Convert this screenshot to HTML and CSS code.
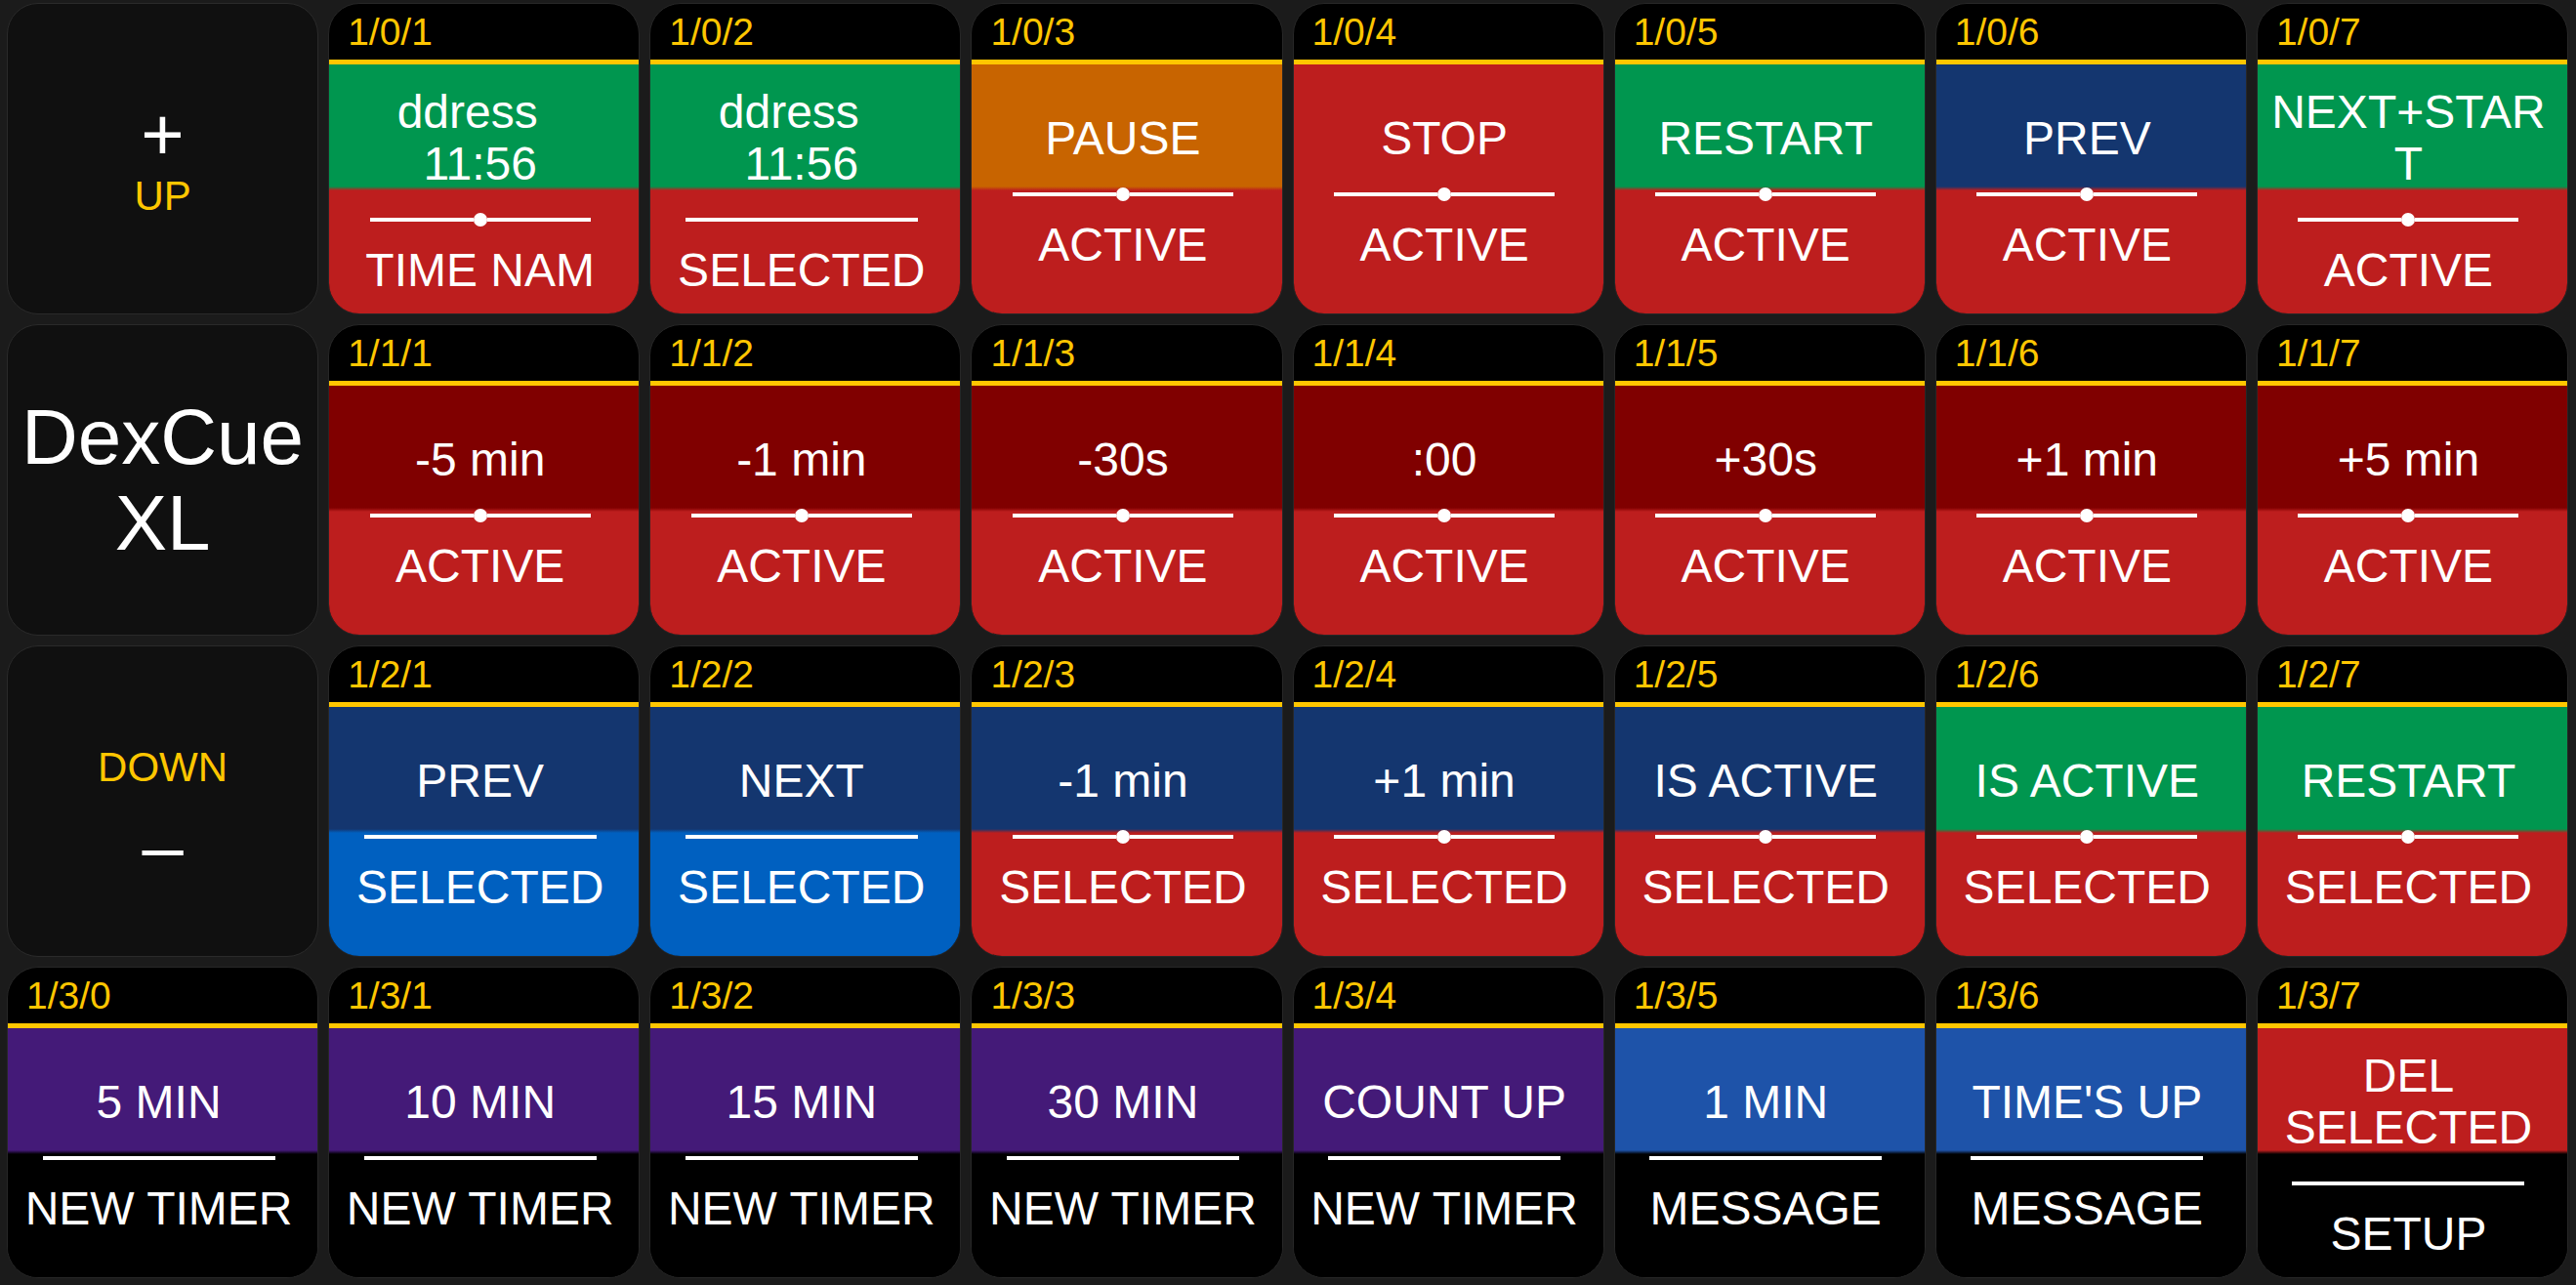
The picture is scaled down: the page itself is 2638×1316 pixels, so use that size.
FILE: index.html
```html
<!DOCTYPE html>
<html lang="en">
<head>
  <meta charset="UTF-8">
  <title>DexCue XL</title>
  <link rel="stylesheet" href="styles.css">
</head>
<body>

  <main class="deck">

    <!-- row 0 -->
    <div class="key nav nav-up">
      <div class="sym">+</div>
      <div class="hint">UP</div>
    </div>
    <div class="key t-green b-red">
      <div class="key-head">1/0/1</div>
      <div class="key-body">
        <div class="line shift">ddress</div>
        <div class="line">11:56</div>
        <div class="rule"><span class="seg"></span><span class="dot"></span><span class="seg"></span></div>
        <div class="line">TIME NAM</div>
      </div>
    </div>
    <div class="key t-green b-red">
      <div class="key-head">1/0/2</div>
      <div class="key-body">
        <div class="line shift">ddress</div>
        <div class="line">11:56</div>
        <div class="rule"><span class="bar"></span></div>
        <div class="line">SELECTED</div>
      </div>
    </div>
    <div class="key t-orange b-red">
      <div class="key-head">1/0/3</div>
      <div class="key-body">
        <div class="line">PAUSE</div>
        <div class="rule"><span class="seg"></span><span class="dot"></span><span class="seg"></span></div>
        <div class="line">ACTIVE</div>
      </div>
    </div>
    <div class="key t-red b-red">
      <div class="key-head">1/0/4</div>
      <div class="key-body">
        <div class="line">STOP</div>
        <div class="rule"><span class="seg"></span><span class="dot"></span><span class="seg"></span></div>
        <div class="line">ACTIVE</div>
      </div>
    </div>
    <div class="key t-green b-red">
      <div class="key-head">1/0/5</div>
      <div class="key-body">
        <div class="line">RESTART</div>
        <div class="rule"><span class="seg"></span><span class="dot"></span><span class="seg"></span></div>
        <div class="line">ACTIVE</div>
      </div>
    </div>
    <div class="key t-navy b-red">
      <div class="key-head">1/0/6</div>
      <div class="key-body">
        <div class="line">PREV</div>
        <div class="rule"><span class="seg"></span><span class="dot"></span><span class="seg"></span></div>
        <div class="line">ACTIVE</div>
      </div>
    </div>
    <div class="key t-green b-red">
      <div class="key-head">1/0/7</div>
      <div class="key-body">
        <div class="line">NEXT+START</div>
        <div class="rule"><span class="seg"></span><span class="dot"></span><span class="seg"></span></div>
        <div class="line">ACTIVE</div>
      </div>
    </div>

    <!-- row 1 -->
    <div class="key nav nav-name">
      <div class="name">DexCue<br>XL</div>
    </div>
    <div class="key t-maroon b-red">
      <div class="key-head">1/1/1</div>
      <div class="key-body">
        <div class="line">-5 min</div>
        <div class="rule"><span class="seg"></span><span class="dot"></span><span class="seg"></span></div>
        <div class="line">ACTIVE</div>
      </div>
    </div>
    <div class="key t-maroon b-red">
      <div class="key-head">1/1/2</div>
      <div class="key-body">
        <div class="line">-1 min</div>
        <div class="rule"><span class="seg"></span><span class="dot"></span><span class="seg"></span></div>
        <div class="line">ACTIVE</div>
      </div>
    </div>
    <div class="key t-maroon b-red">
      <div class="key-head">1/1/3</div>
      <div class="key-body">
        <div class="line">-30s</div>
        <div class="rule"><span class="seg"></span><span class="dot"></span><span class="seg"></span></div>
        <div class="line">ACTIVE</div>
      </div>
    </div>
    <div class="key t-maroon b-red">
      <div class="key-head">1/1/4</div>
      <div class="key-body">
        <div class="line">:00</div>
        <div class="rule"><span class="seg"></span><span class="dot"></span><span class="seg"></span></div>
        <div class="line">ACTIVE</div>
      </div>
    </div>
    <div class="key t-maroon b-red">
      <div class="key-head">1/1/5</div>
      <div class="key-body">
        <div class="line">+30s</div>
        <div class="rule"><span class="seg"></span><span class="dot"></span><span class="seg"></span></div>
        <div class="line">ACTIVE</div>
      </div>
    </div>
    <div class="key t-maroon b-red">
      <div class="key-head">1/1/6</div>
      <div class="key-body">
        <div class="line">+1 min</div>
        <div class="rule"><span class="seg"></span><span class="dot"></span><span class="seg"></span></div>
        <div class="line">ACTIVE</div>
      </div>
    </div>
    <div class="key t-maroon b-red">
      <div class="key-head">1/1/7</div>
      <div class="key-body">
        <div class="line">+5 min</div>
        <div class="rule"><span class="seg"></span><span class="dot"></span><span class="seg"></span></div>
        <div class="line">ACTIVE</div>
      </div>
    </div>

    <!-- row 2 -->
    <div class="key nav nav-down">
      <div class="hint">DOWN</div>
      <div class="sym">–</div>
    </div>
    <div class="key t-navy b-blue">
      <div class="key-head">1/2/1</div>
      <div class="key-body">
        <div class="line">PREV</div>
        <div class="rule"><span class="bar"></span></div>
        <div class="line">SELECTED</div>
      </div>
    </div>
    <div class="key t-navy b-blue">
      <div class="key-head">1/2/2</div>
      <div class="key-body">
        <div class="line">NEXT</div>
        <div class="rule"><span class="bar"></span></div>
        <div class="line">SELECTED</div>
      </div>
    </div>
    <div class="key t-navy b-red">
      <div class="key-head">1/2/3</div>
      <div class="key-body">
        <div class="line">-1 min</div>
        <div class="rule"><span class="seg"></span><span class="dot"></span><span class="seg"></span></div>
        <div class="line">SELECTED</div>
      </div>
    </div>
    <div class="key t-navy b-red">
      <div class="key-head">1/2/4</div>
      <div class="key-body">
        <div class="line">+1 min</div>
        <div class="rule"><span class="seg"></span><span class="dot"></span><span class="seg"></span></div>
        <div class="line">SELECTED</div>
      </div>
    </div>
    <div class="key t-navy b-red">
      <div class="key-head">1/2/5</div>
      <div class="key-body">
        <div class="line">IS ACTIVE</div>
        <div class="rule"><span class="seg"></span><span class="dot"></span><span class="seg"></span></div>
        <div class="line">SELECTED</div>
      </div>
    </div>
    <div class="key t-green b-red">
      <div class="key-head">1/2/6</div>
      <div class="key-body">
        <div class="line">IS ACTIVE</div>
        <div class="rule"><span class="seg"></span><span class="dot"></span><span class="seg"></span></div>
        <div class="line">SELECTED</div>
      </div>
    </div>
    <div class="key t-green b-red">
      <div class="key-head">1/2/7</div>
      <div class="key-body">
        <div class="line">RESTART</div>
        <div class="rule"><span class="seg"></span><span class="dot"></span><span class="seg"></span></div>
        <div class="line">SELECTED</div>
      </div>
    </div>

    <!-- row 3 -->
    <div class="key t-purple b-black">
      <div class="key-head">1/3/0</div>
      <div class="key-body">
        <div class="line">5 MIN</div>
        <div class="rule"><span class="bar"></span></div>
        <div class="line">NEW TIMER</div>
      </div>
    </div>
    <div class="key t-purple b-black">
      <div class="key-head">1/3/1</div>
      <div class="key-body">
        <div class="line">10 MIN</div>
        <div class="rule"><span class="bar"></span></div>
        <div class="line">NEW TIMER</div>
      </div>
    </div>
    <div class="key t-purple b-black">
      <div class="key-head">1/3/2</div>
      <div class="key-body">
        <div class="line">15 MIN</div>
        <div class="rule"><span class="bar"></span></div>
        <div class="line">NEW TIMER</div>
      </div>
    </div>
    <div class="key t-purple b-black">
      <div class="key-head">1/3/3</div>
      <div class="key-body">
        <div class="line">30 MIN</div>
        <div class="rule"><span class="bar"></span></div>
        <div class="line">NEW TIMER</div>
      </div>
    </div>
    <div class="key t-purple b-black">
      <div class="key-head">1/3/4</div>
      <div class="key-body">
        <div class="line">COUNT UP</div>
        <div class="rule"><span class="bar"></span></div>
        <div class="line">NEW TIMER</div>
      </div>
    </div>
    <div class="key t-blue b-black">
      <div class="key-head">1/3/5</div>
      <div class="key-body">
        <div class="line">1 MIN</div>
        <div class="rule"><span class="bar"></span></div>
        <div class="line">MESSAGE</div>
      </div>
    </div>
    <div class="key t-blue b-black">
      <div class="key-head">1/3/6</div>
      <div class="key-body">
        <div class="line">TIME'S UP</div>
        <div class="rule"><span class="bar"></span></div>
        <div class="line">MESSAGE</div>
      </div>
    </div>
    <div class="key t-red b-black">
      <div class="key-head">1/3/7</div>
      <div class="key-body">
        <div class="line">DEL SELECTED</div>
        <div class="rule"><span class="bar"></span></div>
        <div class="line">SETUP</div>
      </div>
    </div>

  </main>

</body>
</html>
```

FILE: styles.css
```css
* {
  margin: 0;
  padding: 0;
  box-sizing: border-box;
}

body {
  font-family: 'Liberation Sans', Arial, sans-serif;
  background-color: #1b1b1b;
  color: #fff;
  overflow: hidden;
}

.deck {
  display: grid;
  grid-template-columns: repeat(8, 1fr);
  grid-template-rows: repeat(4, 319px);
  gap: 10px;
  padding: 3px 8px 0 7px;
  height: 100vh;
}

/* every key */
.key {
  --top: #000;
  --bottom: #000;
  border: 1px solid #272727;
  border-radius: 32px;
  overflow: hidden;
  background-color: #000;
  display: flex;
  flex-direction: column;
}

.key-head {
  height: 62px;
  padding: 0 0 0 19px;
  border-bottom: 5px solid #ffc600;
  color: #ffc600;
  font-size: 39px;
  line-height: 57px;
}

.key-body {
  flex: 1;
  display: flex;
  flex-direction: column;
  align-items: center;
  justify-content: center;
  padding: 4px 14px 0 6px;
  background: linear-gradient(to bottom, var(--top) 125px, var(--bottom) 129px);
}

.line {
  width: 100%;
  font-size: 48px;
  line-height: 53px;
  text-align: center;
  overflow-wrap: anywhere;
}

.line.shift {
  padding-right: 26px;
}

.rule {
  height: 56px;
  padding-top: 6px;
  display: flex;
  align-items: center;
  justify-content: center;
}

.seg {
  width: 106px;
  height: 4px;
  background-color: #fff;
}

.dot {
  width: 14px;
  height: 14px;
  border-radius: 50%;
  background-color: #fff;
}

.bar {
  width: 238px;
  height: 4px;
  background-color: #fff;
}

/* colours */
.t-green { --top: #00964f; }
.t-orange { --top: #c86400; }
.t-red { --top: #bd1e1e; }
.t-navy { --top: #14366f; }
.t-maroon { --top: #800000; }
.t-purple { --top: #441a78; }
.t-blue { --top: #1e53a9; }

.b-red { --bottom: #bd1e1e; }
.b-blue { --bottom: #0060c0; }
.b-black { --bottom: #000; }

/* left column */
.nav {
  background-color: #101010;
  border-color: #2a2a2a;
  align-items: center;
  text-align: center;
}

.nav-name {
  justify-content: center;
}

.name {
  font-size: 80px;
  line-height: 88px;
}

.nav-up {
  padding-top: 96px;
}

.nav-up .sym {
  font-size: 76px;
  line-height: 76px;
}

.nav .hint {
  color: #ffc600;
  font-size: 42px;
  line-height: 49px;
}

.nav-down {
  padding-top: 99px;
}

.nav-down .sym {
  margin-top: 19px;
  font-size: 76px;
  line-height: 76px;
}
```
